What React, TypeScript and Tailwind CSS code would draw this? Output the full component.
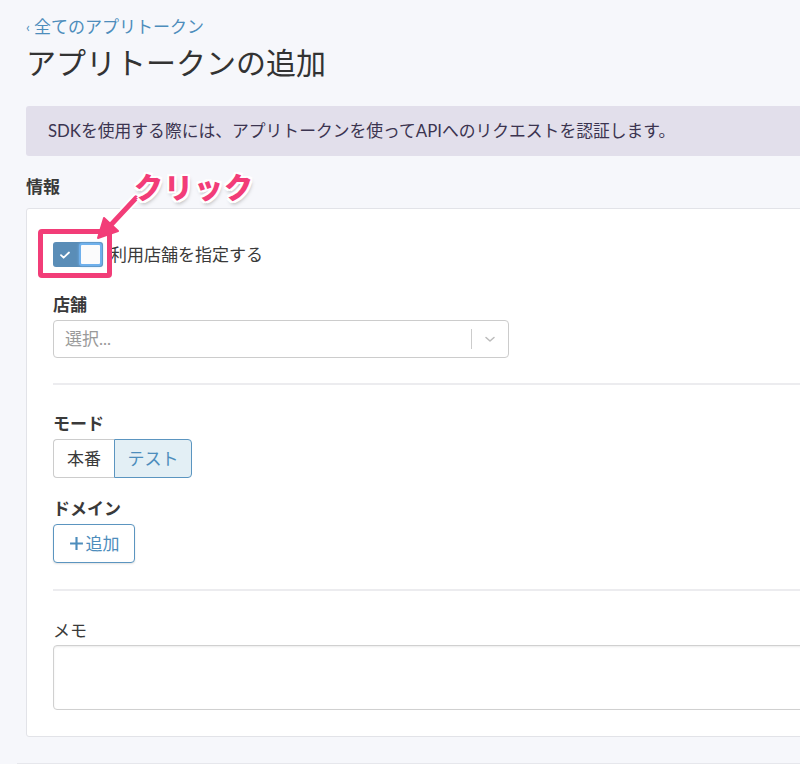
import React from 'react';

const font = { fontFamily: 'Lato, "Noto Sans CJK JP", sans-serif' };

const Label: React.FC<{ text: string; bold?: boolean; className?: string }> = ({ text, bold = true, className = '' }) => (
  <div className={`h-5 text-[17px] leading-5 text-[#3a3a3a] ${bold ? 'font-bold' : 'font-normal'} ${className}`}>{text}</div>
);

const App: React.FC = () => {
  return (
    <div className="relative w-[800px] h-[764px] overflow-hidden bg-[#f6f7fb]" style={font}>
      <div className="pl-[26px] pt-[17px]">
        {/* Breadcrumb */}
        <a className="flex h-5 items-center text-[17px] leading-5 text-[#4d8dbc]">
          <span className="mr-[4px] text-[14px]">‹</span>全てのアプリトークン
        </a>

        <h1 className="mt-[5px] h-10 text-[30px] leading-10 font-normal text-[#333]">アプリトークンの追加</h1>

        {/* Info banner */}
        <div className="mt-[24px] flex h-[50px] w-[800px] items-center rounded-l-[3px] bg-[#e2dfeb] pl-[22px] text-[16.8px] text-[#3b3450]">
          SDKを使用する際には、アプリトークンを使ってAPIへのリクエストを認証します。
        </div>

        <Label text="情報" className="mt-[21px]" />

        {/* Card */}
        <div className="mt-[11px] w-[800px] rounded-[3px] border border-[#e2e3e8] bg-white pl-[26px] pt-[33px] pb-[26px]">
          <div className="flex h-[25px] items-center">
            <div className="flex h-[25px] w-[50px] items-center rounded-[3px] bg-[#5a8db7]">
              <svg className="ml-[6px] h-3 w-3 text-white" viewBox="0 0 12 12" fill="none" stroke="currentColor" strokeWidth="1.8" strokeLinecap="round" strokeLinejoin="round">
                <path d="M2 6.2l2.6 2.5L10 3.5" />
              </svg>
              <div className="ml-auto mr-[1px] h-[23px] w-[23px] rounded-[3px] border-2 border-[#6fb0ec] bg-[#fbfbfc] shadow-[0_0_3px_#6fb0ec]" />
            </div>
            <span className="ml-[7px] text-[17px] text-[#3a3a3a]">利用店舗を指定する</span>
          </div>

          <Label text="店舗" className="mt-[28px]" />
          <div className="mt-[5px] flex h-[38px] w-[456px] items-center rounded-[4px] border border-[#cccccc] bg-white">
            <span className="ml-[11px] text-[17px] text-[#9a9a9a]">選択...</span>
            <div className="ml-auto h-5 w-px bg-[#cccccc]" />
            <svg className="mx-[11px] h-[14px] w-[14px] text-[#bbbbbb]" viewBox="0 0 14 14" fill="none" stroke="currentColor" strokeWidth="1.5" strokeLinecap="round" strokeLinejoin="round">
              <path d="M3 5.5l4 3.5 4-3.5" />
            </svg>
          </div>

          <div className="mt-[25px] h-[2px] bg-[#ececef]" />

          <Label text="モード" className="mt-[29px]" />
          <div className="mt-[5px] flex h-[39px]">
            <div className="flex w-[61px] items-center justify-center rounded-l-[4px] border border-r-0 border-[#cccccc] bg-white text-[17px] text-[#3a3a3a]">本番</div>
            <div className="flex w-[78px] items-center justify-center rounded-r-[4px] border border-[#5b95c0] bg-[#e3eff5] text-[17px] text-[#4d8dbc]">テスト</div>
          </div>

          <Label text="ドメイン" className="mt-[21px]" />
          <button className="mt-[5px] flex h-[39px] w-[82px] items-center justify-center rounded-[4px] border border-[#5b95c0] bg-white text-[17px] text-[#4d8dbc] shadow-[0_1px_2px_rgba(0,0,0,0.12)]">
            <svg className="mr-[2px] h-[15px] w-[15px]" viewBox="0 0 14 14" fill="none" stroke="currentColor" strokeWidth="2">
              <path d="M7 1v12M1 7h12" />
            </svg>
            追加
          </button>

          <div className="mt-[26px] h-[2px] bg-[#ececef]" />

          <Label text="メモ" bold={false} className="mt-[30px]" />
          <div className="mt-[4px] h-[65px] rounded-[4px] border border-[#d0d0d0] bg-white shadow-[inset_0_1px_2px_rgba(0,0,0,0.08)]" />
        </div>

        <div className="mt-[26px] ml-[-9px] h-[2px] bg-[#e6e7ec]" />
      </div>

      {/* Annotation overlay */}
      <div className="absolute left-[38px] top-[229px] h-[49px] w-[74px] rounded-[4px] border-[5px] border-[#f23d78]" />
      <svg className="absolute left-0 top-0" width="800" height="764" viewBox="0 0 800 764">
        <path d="M136 198L108 228" fill="none" stroke="#ffffff" strokeWidth="9" strokeLinecap="round" opacity="0.9" />
        <path d="M136 198L108 228" stroke="#f23d78" strokeWidth="5" strokeLinecap="round" />
        <path d="M98 238L104 218L118 231Z" fill="#f23d78" stroke="#f23d78" strokeWidth="2" strokeLinejoin="round" />
      </svg>
      <div
        className="absolute left-[134px] top-[168px] text-[29px] leading-[40px] font-black tracking-[1px] text-[#f23d78]"
        style={{ textShadow: '2px 0 0 #fff, -2px 0 0 #fff, 0 2px 0 #fff, 0 -2px 0 #fff, 2px 2px 0 #fff, -2px -2px 0 #fff, 2px -2px 0 #fff, -2px 2px 0 #fff, 1px 3px 4px rgba(0,0,0,0.35)' }}
      >
        クリック
      </div>
    </div>
  );
};

export default App;
